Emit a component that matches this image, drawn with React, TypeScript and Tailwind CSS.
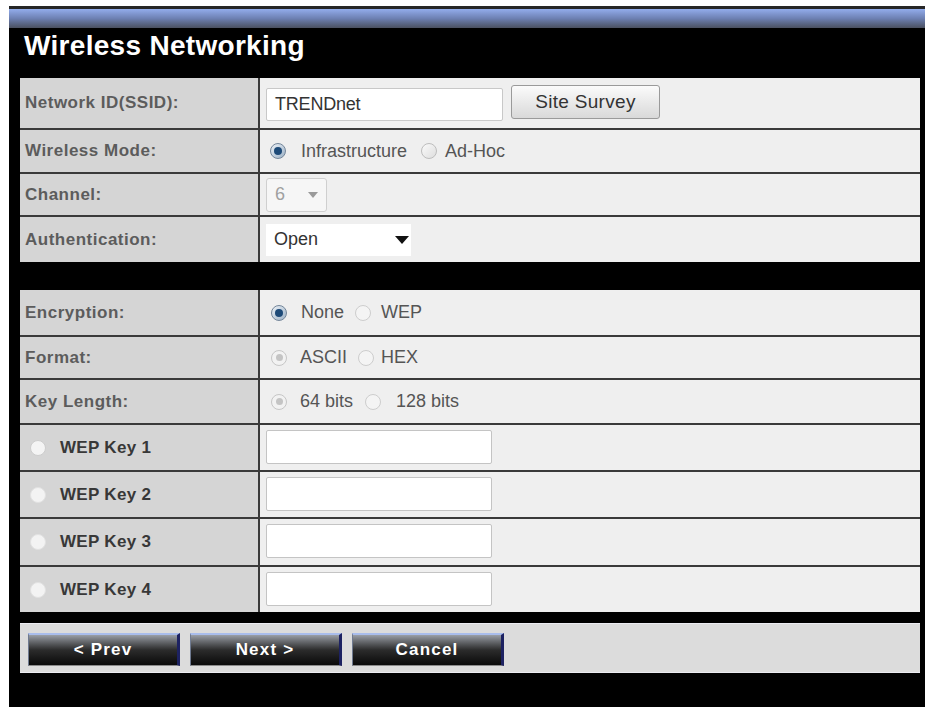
import type { ReactNode } from "react";

type RadioKind = "on" | "off" | "dison" | "disoff" | "ghost";

function Radio({ kind }: { kind: RadioKind }) {
  if (kind === "on") {
    return (
      <span className="w-[16px] h-[16px] shrink-0 rounded-full border border-[#74869a] bg-gradient-to-br from-[#eef3f8] to-[#9cb1c6] flex items-center justify-center">
        <span className="w-[8px] h-[8px] rounded-full bg-[#1d4a78]" />
      </span>
    );
  }
  if (kind === "dison") {
    return (
      <span className="w-[16px] h-[16px] shrink-0 rounded-full border border-[#c6c6c6] bg-[#f2f2f2] flex items-center justify-center">
        <span className="w-[7px] h-[7px] rounded-full bg-[#c4c4c4]" />
      </span>
    );
  }
  if (kind === "ghost") {
    return <span className="w-[16px] h-[16px] shrink-0 rounded-full border border-[#e2e2e2] bg-[#f3f3f3]" />;
  }
  return (
    <span
      className={
        kind === "off"
          ? "w-[16px] h-[16px] shrink-0 rounded-full border border-[#bdbdbd] bg-gradient-to-br from-[#fafafa] to-[#dedede]"
          : "w-[16px] h-[16px] shrink-0 rounded-full border border-[#cdcdcd] bg-[#f4f4f4]"
      }
    />
  );
}

function Row({ label, h, first, children }: { label: ReactNode; h: string; first?: boolean; children?: ReactNode }) {
  return (
    <div className={`flex ${h} ${first ? "" : "border-t-2 border-[#3a3a3a]"}`}>
      <div className="w-[240px] shrink-0 bg-[#d5d5d5] border-r-2 border-[#3a3a3a] flex items-center pl-[5px] text-[17px] font-bold tracking-[0.5px] text-[#5c5c5c]">
        {label}
      </div>
      <div className="flex-1 bg-[#efefef] flex items-center text-[18px] text-[#555]">{children}</div>
    </div>
  );
}

// radio + caption; spacing classes are passed in full
function Choice({ kind, text, cls }: { kind: RadioKind; text: string; cls: string }) {
  return (
    <span className={`flex items-center ${cls}`}>
      <Radio kind={kind} />
      <span>{text}</span>
    </span>
  );
}

function Caret({ color, w, h }: { color: string; w: number; h: number }) {
  return (
    <svg width={w} height={h} viewBox={`0 0 ${w} ${h}`}>
      <path d={`M0 0 L${w} 0 L${w / 2} ${h} Z`} fill={color} />
    </svg>
  );
}

function KeyRow({ n, h }: { n: number; h: string }) {
  return (
    <Row
      h={h}
      label={
        <span className="flex items-center pl-[5px] gap-[14px] text-[#383838] tracking-[0.3px]">
          <Radio kind={n === 1 ? "disoff" : "ghost"} />
          <span>WEP Key {n}</span>
        </span>
      }
    >
      <div className="ml-[6px] w-[226px] h-[34px] -mt-[2px] bg-white border border-[#c4c4c4] rounded-[2px]" />
    </Row>
  );
}

function NavButton({ children }: { children: ReactNode }) {
  return (
    <button className="w-[152px] h-[33px] border-t-2 border-t-[#a9bdec] border-l border-l-[#6f7a90] border-r-[3px] border-r-[#1d2262] border-b border-b-[#8a8a8a] bg-gradient-to-b from-[#9a9fa7] via-[#2c2c2c] to-[#0a0a0a] text-white font-bold text-[17px] tracking-[1.2px]">
      {children}
    </button>
  );
}

export default function App() {
  return (
    <div className="bg-white h-[709px] pt-[6px] pl-[9px]" style={{ fontFamily: '"Liberation Sans", Arial, sans-serif' }}>
      <div className="w-[916px] h-[701px] bg-black border-t-[3px] border-[#262626]">
        <div className="h-[19px] bg-gradient-to-b from-[#93adec] via-[#6d80b2] to-[#4a5060]" />
        <div className="h-[50px] pl-[15px] pt-[2px]">
          <h1 className="text-white font-bold text-[28px] leading-[32px] tracking-[0.3px]">Wireless Networking</h1>
        </div>

        <div className="pl-[11px] pr-[5px]">
          <div className="flex flex-col">
            <Row first h="h-[50px]" label="Network ID(SSID):">
              <div className="ml-[6px] w-[237px] h-[33px] mt-[2px] bg-white border border-[#c8c8c8] rounded-[2px] flex items-center pl-[8px] text-[18px] text-[#333] tracking-[-0.2px]">
                TRENDnet
              </div>
              <button className="ml-[8px] w-[149px] h-[34px] -mt-[2px] rounded-[3px] border border-[#9a9a9a] bg-gradient-to-b from-[#fbfbfb] to-[#d9d9d9] text-[19px] tracking-[0.3px] text-[#333]">
                Site Survey
              </button>
            </Row>
            <Row h="h-[44px]" label="Wireless Mode:">
              <Choice kind="on" text="Infrastructure" cls="ml-[10px] gap-[15px]" />
              <Choice kind="off" text="Ad-Hoc" cls="ml-[14px] gap-[8px]" />
            </Row>
            <Row h="h-[43px]" label="Channel:">
              <div className="ml-[6px] w-[61px] h-[34px] bg-[#f6f6f6] border border-[#cfcfcf] rounded-[3px] flex items-center justify-between pl-[8px] pr-[8px] text-[#a0a0a0]">
                <span>6</span>
                <Caret color="#9a9a9a" w={10} h={6} />
              </div>
            </Row>
            <Row h="h-[47px]" label="Authentication:">
              <div className="ml-[6px] w-[145px] h-[32px] bg-white flex items-center justify-between pl-[8px] pr-[2px] text-[#333]">
                <span>Open</span>
                <Caret color="#111" w={14} h={8} />
              </div>
            </Row>
          </div>

          <div className="h-[28px]" />

          <div className="flex flex-col">
            <Row first h="h-[45px]" label="Encryption:">
              <Choice kind="on" text="None" cls="ml-[11px] gap-[14px]" />
              <Choice kind="disoff" text="WEP" cls="ml-[11px] gap-[10px]" />
            </Row>
            <Row h="h-[43px]" label="Format:">
              <Choice kind="dison" text="ASCII" cls="ml-[11px] gap-[13px]" />
              <Choice kind="disoff" text="HEX" cls="ml-[11px] gap-[7px]" />
            </Row>
            <Row h="h-[45px]" label="Key Length:">
              <Choice kind="dison" text="64 bits" cls="ml-[11px] gap-[13px]" />
              <Choice kind="disoff" text="128 bits" cls="ml-[12px] gap-[15px]" />
            </Row>
            <KeyRow n={1} h="h-[47px]" />
            <KeyRow n={2} h="h-[47px]" />
            <KeyRow n={3} h="h-[48px]" />
            <KeyRow n={4} h="h-[47px]" />
          </div>

          <div className="h-[11px]" />

          <div className="h-[50px] bg-[#dcdcdc] border-t border-b border-[#ececf2] pl-[8px] pt-[9px] flex gap-[10px] items-start">
            <NavButton>&lt; Prev</NavButton>
            <NavButton>Next &gt;</NavButton>
            <NavButton>Cancel</NavButton>
          </div>
        </div>
      </div>
    </div>
  );
}
